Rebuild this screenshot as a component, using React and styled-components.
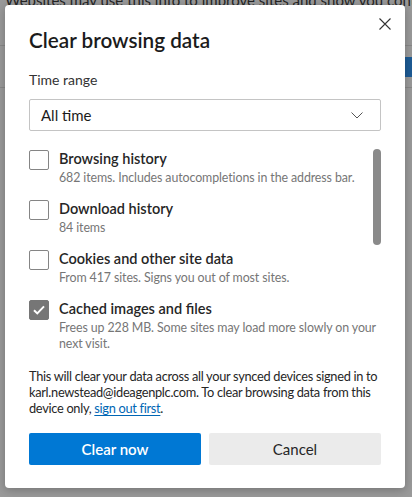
import React from "react";
import styled, { createGlobalStyle } from "styled-components";

const GlobalStyle = createGlobalStyle`
  html, body {
    margin: 0;
    padding: 0;
  }
  body {
    font-family: "Segoe UI", Lato, "Open Sans", sans-serif;
    -webkit-font-smoothing: antialiased;
  }
`;

// dimmed settings page behind the dialog
const Page = styled.div`
  position: relative;
  width: 412px;
  height: 497px;
  overflow: hidden;
  background: #9a9a9a;
`;

const BackText = styled.div`
  margin: -9px 0 0 5px;
  font-size: 15px;
  line-height: 18px;
  color: #262626;
  white-space: nowrap;
`;

const BackRule = styled.div`
  height: 1px;
  margin-top: ${(p) => p.$top}px;
  background: #888888;
`;

const BackTab = styled.div`
  width: 8px;
  height: 20px;
  margin: ${(p) => p.$top}px 0 0 auto;
  background: #1d5b95;
`;

const Overlay = styled.div`
  position: absolute;
  inset: 0;
  padding: 5px;
  box-sizing: border-box;
`;

const Dialog = styled.div`
  position: relative;
  width: 400px;
  box-sizing: border-box;
  padding: 21px 24px 23px;
  background: #ffffff;
  border-radius: 4px;
  box-shadow: 0 2px 10px rgba(0, 0, 0, 0.25);
  display: flex;
  flex-direction: column;
`;

const CloseButton = styled.button`
  position: absolute;
  top: 13px;
  right: 14px;
  width: 12px;
  height: 12px;
  padding: 0;
  border: 0;
  background: none;
  display: flex;
  cursor: pointer;
`;

const Title = styled.h2`
  margin: 0;
  font-size: 20.7px;
  line-height: 28px;
  font-weight: 600;
  color: #1b1b1b;
`;

const FieldLabel = styled.div`
  margin-top: 16px;
  font-size: 14px;
  line-height: 20px;
  color: #333333;
`;

const Select = styled.div`
  margin-top: 9px;
  height: 32px;
  box-sizing: border-box;
  border: 1px solid #c4c4c4;
  border-radius: 2px;
  padding: 0 17px 0 11px;
  display: flex;
  align-items: center;
  justify-content: space-between;
  font-size: 15px;
  color: #1b1b1b;
`;

const List = styled.div`
  position: relative;
  margin-top: 18px;
  height: 203px;
  overflow: hidden;
  display: flex;
  flex-direction: column;
  gap: 13px;
`;

const Thumb = styled.div`
  position: absolute;
  top: 0;
  right: 0;
  width: 8px;
  height: 96px;
  border-radius: 4px;
  background: #8a8a8a;
`;

const Row = styled.label`
  display: grid;
  grid-template-columns: 20px 1fr;
  column-gap: 10px;
  cursor: pointer;
`;

const Box = styled.span`
  width: 20px;
  height: 20px;
  box-sizing: border-box;
  margin-top: 1px;
  border-radius: 2px;
  border: 1px solid ${(p) => (p.$checked ? "#767676" : "#858585")};
  background: ${(p) => (p.$checked ? "#767676" : "#ffffff")};
  display: flex;
  align-items: center;
  justify-content: center;
`;

const RowTitle = styled.div`
  font-size: 14.5px;
  line-height: 20px;
  font-weight: 600;
  color: #262626;
`;

const RowNote = styled.div`
  margin-top: 1px;
  font-size: 12.4px;
  letter-spacing: -0.1px;
  line-height: 16px;
  color: #767676;
  white-space: nowrap;
`;

const Info = styled.p`
  margin: 16px 0 0;
  font-size: 12.8px;
  letter-spacing: -0.3px;
  line-height: 16px;
  color: #262626;
`;

const InfoLink = styled.a`
  color: #0066b4;
  text-decoration: underline;
  text-underline-offset: 2px;
`;

const Actions = styled.div`
  margin-top: 17px;
  display: grid;
  grid-template-columns: 1fr 1fr;
  gap: 8px;
`;

const Button = styled.button`
  height: 32px;
  border: 0;
  border-radius: 2px;
  font-family: inherit;
  font-size: 15px;
  font-weight: ${(p) => (p.$primary ? 600 : 400)};
  color: ${(p) => (p.$primary ? "#ffffff" : "#262626")};
  background: ${(p) => (p.$primary ? "#0078d4" : "#ebebeb")};
  cursor: pointer;
`;

const items = [
  {
    title: "Browsing history",
    note: ["682 items. Includes autocompletions in the address bar."],
  },
  { title: "Download history", note: ["84 items"] },
  {
    title: "Cookies and other site data",
    note: ["From 417 sites. Signs you out of most sites."],
  },
  {
    title: "Cached images and files",
    note: ["Frees up 228 MB. Some sites may load more slowly on your", "next visit."],
    checked: true,
  },
];

const Check = () => (
  <svg width="12" height="10" viewBox="0 0 12 10">
    <polyline
      points="1,5.2 4.3,8.4 11,1.4"
      fill="none"
      stroke="#ffffff"
      strokeWidth="2"
    />
  </svg>
);

const App = () => {
  return (
    <Page>
      <GlobalStyle />
      <BackText>Websites may use this info to improve sites and show you content</BackText>
      <BackRule $top={36} />
      <BackTab $top={11} />
      <BackRule $top={10} />

      <Overlay>
        <Dialog role="dialog">
          <CloseButton aria-label="Close">
            <svg width="12" height="12" viewBox="0 0 12 12">
              <path d="M0.5 0.5L11.5 11.5M11.5 0.5L0.5 11.5" stroke="#333" strokeWidth="1.1" />
            </svg>
          </CloseButton>
          <Title>Clear browsing data</Title>

          <FieldLabel>Time range</FieldLabel>
          <Select>
            All time
            <svg width="12" height="7" viewBox="0 0 12 7">
              <polyline points="0.5,0.5 6,6 11.5,0.5" fill="none" stroke="#555" strokeWidth="1" />
            </svg>
          </Select>

          <List>
            {items.map((it) => (
              <Row key={it.title}>
                <Box $checked={it.checked}>{it.checked && <Check />}</Box>
                <div>
                  <RowTitle>{it.title}</RowTitle>
                  <RowNote>
                    {it.note.map((line, i) => (
                      <React.Fragment key={i}>
                        {i > 0 && <br />}
                        {line}
                      </React.Fragment>
                    ))}
                  </RowNote>
                </div>
              </Row>
            ))}
            <Thumb />
          </List>

          <Info>
            This will clear your data across all your synced devices signed in to
            <br />
            karl.newstead@ideagenplc.com. To clear browsing data from this
            <br />
            device only, <InfoLink href="#">sign out first</InfoLink>.
          </Info>

          <Actions>
            <Button $primary>Clear now</Button>
            <Button>Cancel</Button>
          </Actions>
        </Dialog>
      </Overlay>
    </Page>
  );
};

export default App;
